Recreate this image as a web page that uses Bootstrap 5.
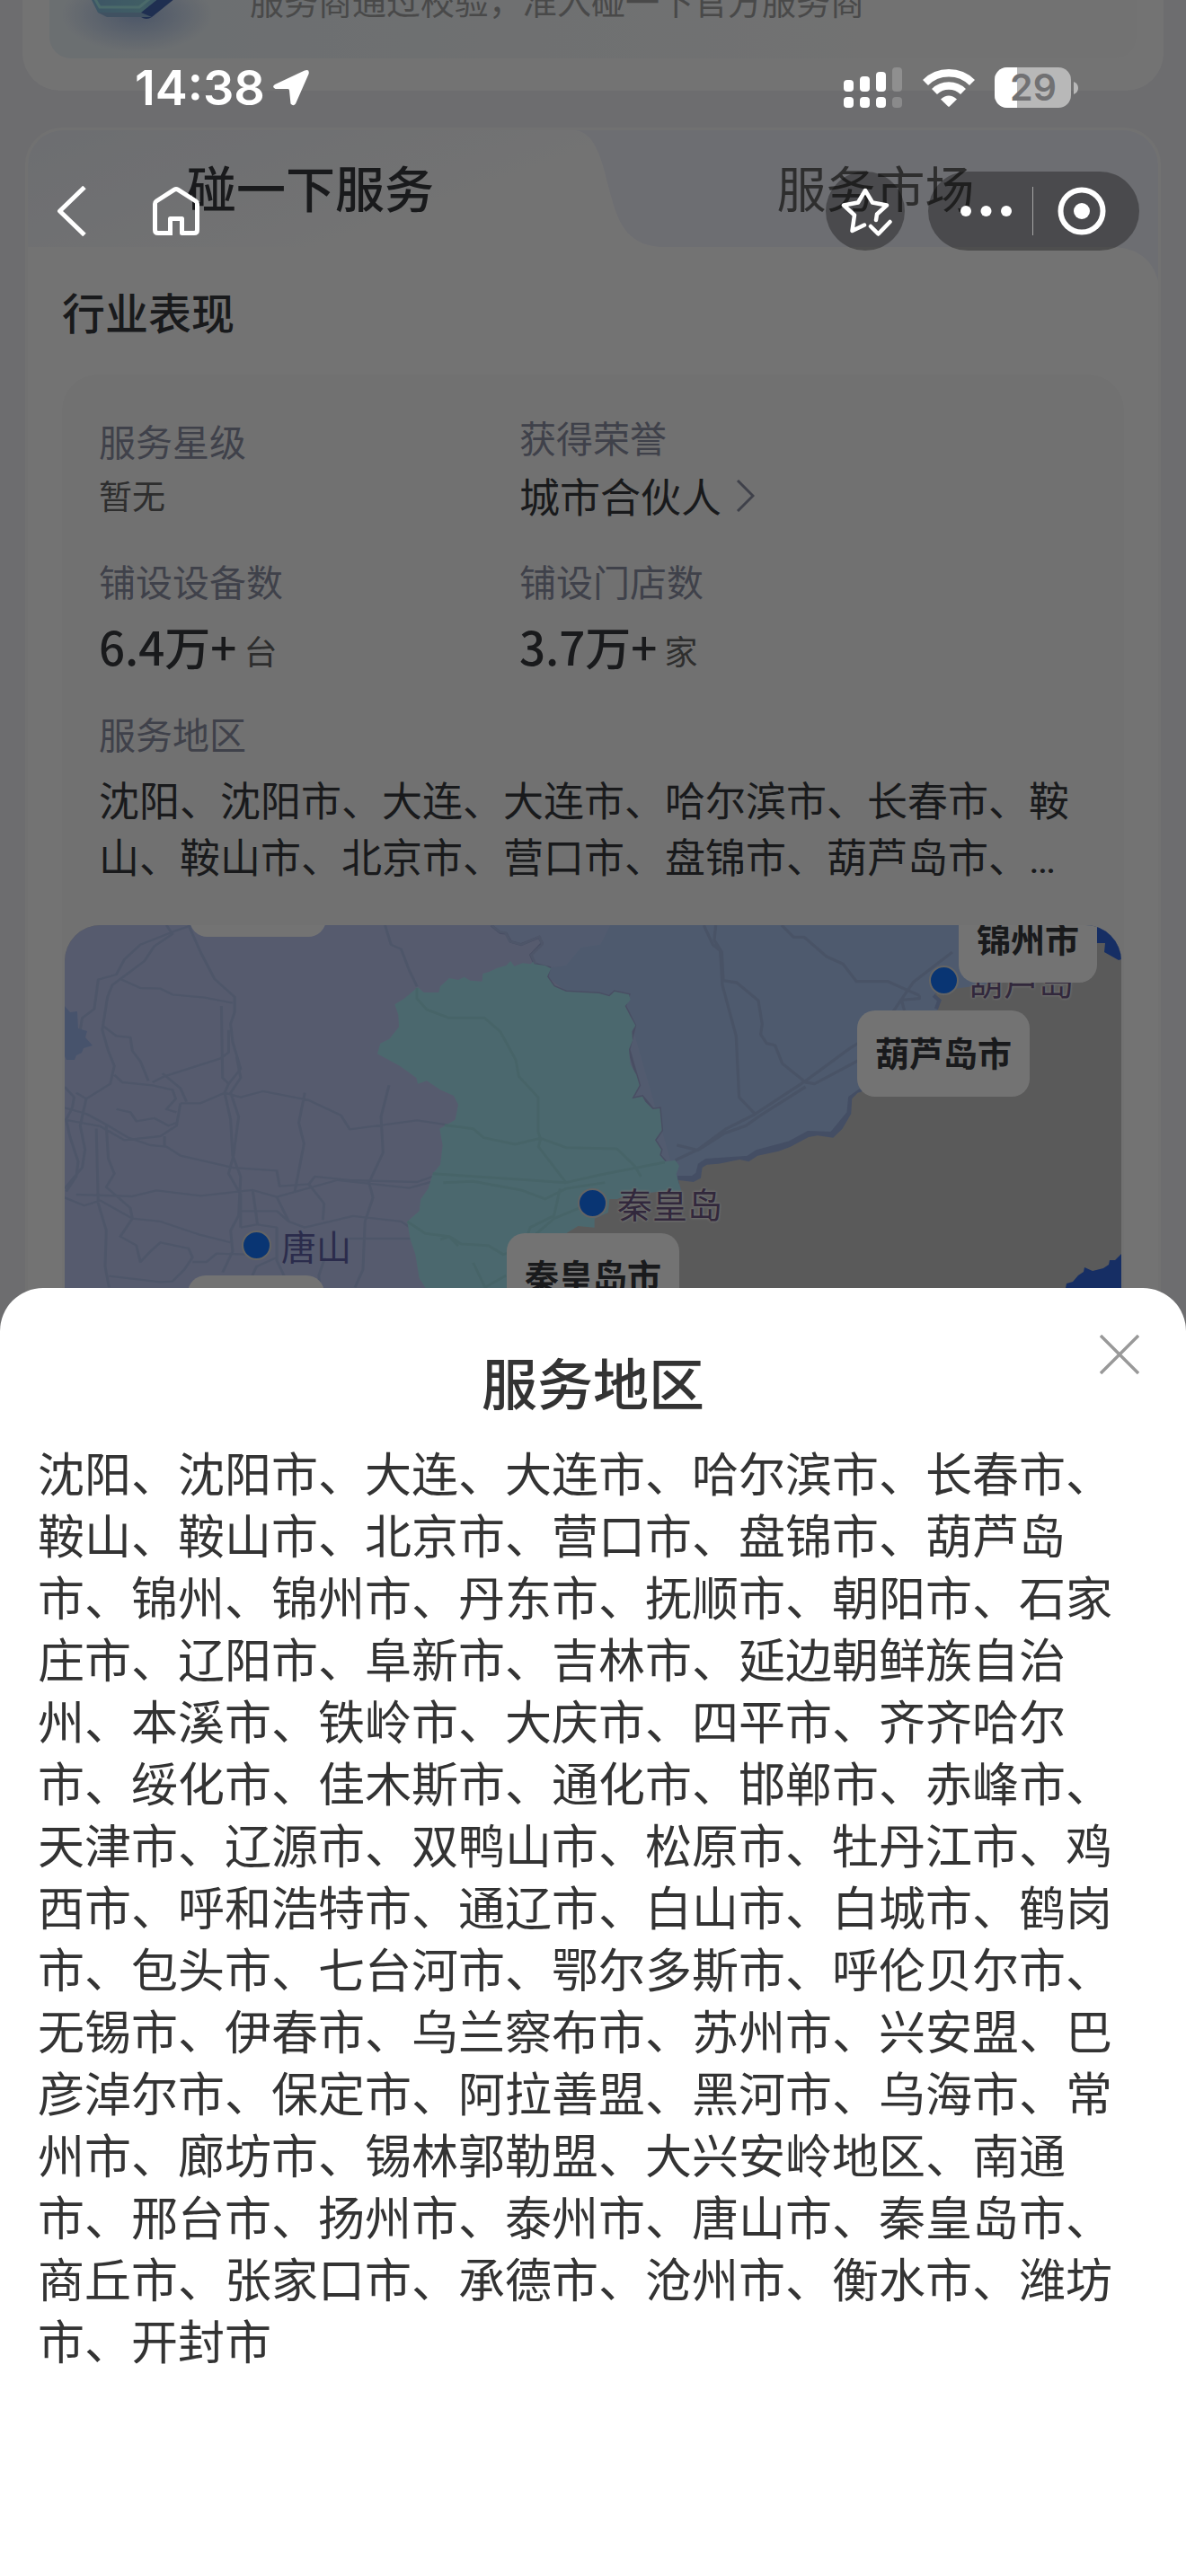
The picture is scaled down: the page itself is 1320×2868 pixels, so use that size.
<!DOCTYPE html>
<html lang="zh-CN">
<head>
<meta charset="utf-8">
<meta name="viewport" content="width=device-width, initial-scale=1">
<title>服务地区</title>
<link href="https://cdn.jsdelivr.net/npm/bootstrap@5.3.0/dist/css/bootstrap.min.css" rel="stylesheet">
<style>
  body { font-family: "Noto Sans CJK SC", sans-serif; background: #f1f1f6; color: #383a3e; min-height: 100vh; overflow: hidden; }
  button { border: 0; background: none; padding: 0; color: inherit; }
  svg { display: block; }
  .page-body { margin-top: -60px; height: 100vh; overflow: hidden; }
  .cert-card { margin: 0 25px; padding: 0 30px 36px; background: #fff; border-radius: 0 0 42px 42px; }
  .cert-inner { height: 125px; padding-bottom: 6px; border-radius: 0 0 24px 24px; background: linear-gradient(90deg, #edf5fb, #f6f9fb 45%, #fdfdfd 80%); font-size: 38px; color: #a2a2a2; }
  .cert-badge { width: 223px; height: 125px; }
  .service-card { margin: 41px 28px 0; border: 3px solid #fbfbfb; border-radius: 42px 42px 0 0; background: #fff; overflow: hidden; }
  .tab-strip { height: 130px; background: linear-gradient(160deg, #f0f3fa, #fff 45%); }
  .tab-shape { inset: 0 0 auto auto; width: 648px; height: 168px; }
  .tab-item { font-size: 55px; line-height: 80px; padding-bottom: 6px; color: #666; }
  .tab-item.active { color: #383a3e; font-weight: 500; }
  .perf { padding: 0 38px; }
  .perf-title { font-size: 48px; line-height: 70px; font-weight: 500; margin: 36px 0 36px; }
  .perf-panel { background: #fafafa; border-radius: 40px; padding: 44px 3px 0; }
  .perf-text { padding: 0 38px 42px; }
  .col-first { width: 468px; }
  .fact-star { padding-top: 4px; }
  .fact-label { font-size: 41px; line-height: 50px; color: #8c90a5; }
  .fact-label + * { margin-top: 11px; }
  .fact-label + .fact-count { margin-top: 18px; }
  .fact-row { margin-top: 39px; }
  .fact-region { margin-top: 42px; }
  .fact-label + .region-line { margin-top: 21px; }
  .fact-big { font-size: 45px; line-height: 60px; }
  .fact-num { font-size: 51px; line-height: 60px; font-weight: 500; }
  .fact-unit { font-size: 37px; line-height: 50px; color: #666; }
  .region-line { font-family: Roboto, "Noto Sans CJK SC", sans-serif; font-size: 45px; line-height: 63px; }
  .city-map { height: 500px; border-radius: 40px 40px 0 0; overflow: hidden; background: #c8c8c8; }
  .city-map svg { width: 1176px; height: 500px; }
  .map-pin { height: 38px; gap: 11px; font-size: 39px; line-height: 38px; color: #6f5985; text-shadow: 0 0 3px #fff, 0 0 3px #fff; }
  .map-pin::before { content: ""; width: 33px; height: 33px; border-radius: 50%; background: #1677ff; border: 2px solid #ddd; }
  .map-pin.inland { color: #6062a8; text-shadow: none; }
  .map-tag { height: 96px; padding: 0 20px; border-radius: 20px; background: #fff; font-size: 38px; font-weight: 700; line-height: 92px; min-width: 152px; }
  .page-shade { inset: 0; background: rgba(0,0,0,.55); }
  .top-bar { inset: 0 0 auto 0; color: #fff; padding-top: 66px; }
  .status-row { height: 64px; padding: 0 120px 0 150px; font-family: Inter, sans-serif; font-weight: 600; font-size: 54px; line-height: 64px; }
  .status-icons { gap: 22px; }
  .nav-row { height: 88px; margin-top: 61px; padding: 0 52px 0 63px; }
  .nav-home { margin-left: 73px; }
  .round-btn { width: 88px; height: 88px; border-radius: 50%; background: rgba(0,0,0,.32); }
  .capsule { width: 235px; height: 88px; margin-left: 26px; border-radius: 44px; background: rgba(0,0,0,.32); }
  .region-sheet.offcanvas { height: 50vh; border: 0; border-radius: 48px 48px 0 0; background: #fff; color: #333; padding: 64px 42px 0; visibility: visible; }
  .sheet-title { font-size: 62px; line-height: 80px; font-weight: 500; }
  .sheet-list { font-size: 52px; line-height: 69px; margin: 26px 0 0; }
  .sheet-close { top: 52px; right: 52px; }
</style>
<script src="https://cdn.jsdelivr.net/npm/bootstrap@5.3.0/dist/js/bootstrap.bundle.min.js"></script>
</head>
<body>
<main class="page-body">
  <section class="cert-card">
    <div class="cert-inner d-flex align-items-center">
      <svg class="cert-badge flex-shrink-0" viewBox="0 0 223 125" aria-hidden="true">
        <defs>
          <radialGradient id="glow"><stop offset="0" stop-color="#a9c0e6"/><stop offset="1" stop-color="#a9c0e6" stop-opacity="0"/></radialGradient>
          <linearGradient id="gem" x1="0" x2="1"><stop offset="0" stop-color="#86bce2"/><stop offset=".6" stop-color="#8fd0de"/><stop offset="1" stop-color="#6da4e0"/></linearGradient>
        </defs>
        <ellipse cx="98" cy="79" rx="84" ry="42" fill="url(#glow)"/>
        <path d="M102 76l48-37v14l-36 29q-6 4-12 0z" fill="#4668b4"/>
        <path d="M42 53l12 24h48l42-34-30-30H60z" fill="url(#gem)"/>
        <path d="M48 57l8 14h44l32-26" fill="none" stroke="#a6ecec" stroke-width="3"/>
        <path d="M54 77h48l12 5H64z" fill="#8fb4d8"/>
      </svg>
      <span>服务商通过校验，准入碰一下官方服务商</span>
    </div>
  </section>

  <section class="service-card">
    <div class="tab-strip position-relative">
      <svg class="tab-shape position-absolute" viewBox="0 0 648 168" preserveAspectRatio="none" aria-hidden="true">
        <path d="M0 0C20 3 28 28 36 62C46 100 54 130 100 130H600C628 132 642 146 648 168V0z" fill="#f1f3fd"/>
      </svg>
      <div class="d-flex h-100 position-relative" role="tablist">
        <button class="tab-item active col-6" type="button" role="tab" aria-selected="true">碰一下服务</button>
        <button class="tab-item col-6" type="button" role="tab" aria-selected="false">服务市场</button>
      </div>
    </div>
    <div class="perf">
      <h2 class="perf-title">行业表现</h2>
      <div class="perf-panel">
        <div class="perf-text">
          <div class="d-flex">
            <div class="col-first fact-star">
              <div class="fact-label">服务星级</div>
              <div class="fact-unit">暂无</div>
            </div>
            <div>
              <div class="fact-label">获得荣誉</div>
              <a class="fact-big d-flex align-items-center text-reset text-decoration-none" href="#honor">城市合伙人
                <svg class="ms-3" width="21" height="36" viewBox="0 0 21 36" fill="none" stroke="#8c90a5" stroke-width="3" aria-hidden="true"><path d="M2 1l17 17L2 35"/></svg>
              </a>
            </div>
          </div>
          <div class="fact-row d-flex">
            <div class="col-first">
              <div class="fact-label">铺设设备数</div>
              <div class="fact-count d-flex align-items-end"><span class="fact-num">6.4万+</span><span class="fact-unit ms-2">台</span></div>
            </div>
            <div>
              <div class="fact-label">铺设门店数</div>
              <div class="fact-count d-flex align-items-end"><span class="fact-num">3.7万+</span><span class="fact-unit ms-2">家</span></div>
            </div>
          </div>
          <div class="fact-label fact-region">服务地区</div>
          <div class="region-line">沈阳、沈阳市、大连、大连市、哈尔滨市、长春市、鞍山、鞍山市、北京市、营口市、盘锦市、葫芦岛市、…</div>
        </div>
        <div class="city-map position-relative">
          <svg viewBox="0 0 1176 500" aria-hidden="true">
            <rect width="1176" height="500" fill="#bfcaf4"/>
            <g transform="matrix(.3333 0 0 .3333 328 0)">
              <path d="M440 0L470 25 490 28 505 55 540 65 600 40 610 60 572 100 585 130 800 300 1000 900H2560V0z" fill="#b6c9f5"/>
              <path d="M838 0L805 65 740 75 690 135 640 142 627 172 700 230 900 300 1060 860H2560V0z" fill="#adc8f4"/>
              <path d="M440 0L470 25 490 28 505 55 540 65 600 40 610 60 572 100 585 130 635 142 627 172 650 205 690 222 800 228 835 238 852 222 900 232 887 270 920 335 900 415 935 535 910 580 945 572 980 615 1003 612 1010 685 987 718 1008 750 1003 768 1022 790" fill="none" stroke="#a2aedc" stroke-width="9"/>
            </g>
            <!-- roads, west -->
            <g transform="matrix(.4464 0 0 .3333 -72 -30)" fill="none" stroke="#adbee9" stroke-width="7" stroke-linejoin="round">
              <path d="M480 90L435 110 350 155 310 205 290 255 245 272 235 370 205 400 200 440M415 90L430 120 385 160 360 210 320 250 280 290 268 330 255 440 270 510 285 560 275 620 215 670 190 650M470 90L500 180 535 270 585 330 585 380 575 420 580 480 600 570 570 620 555 600 552 360M300 270L350 300 400 302 430 322 510 332 580 350M255 425L290 460 325 465 330 510 350 545 370 610M285 590L305 615 380 625 430 640 438 670 415 705 440 715M405 585L450 635 465 680"/>
              <path d="M380 615L410 595 550 535 570 515 570 440M570 620L560 650 575 740 580 860 600 930 595 1060 575 1110 580 1180 555 1250M590 530L600 600 575 650 595 730 582 860 570 920 600 990 600 1100M450 685H500L560 650 600 665 655 645 770 675 850 725 872 772 1040 742 1120 758 1180 770 1205 800 1285 822 1345 803 1410 832 1540 835 1570 850M760 650L745 750 758 820 735 980M970 625L950 730 955 850 920 950 930 1000 910 1080 905 1240 885 1300"/>
              <path d="M161 630L185 665 180 700 165 740 175 800 195 880 190 930 165 980M215 670L200 760 212 840 205 900 161 970M161 700L215 720 270 760 320 800 375 825 415 830 450 860 580 900 690 910 697 962 770 955 785 930 870 942 1040 948 1100 920 1400 945M161 740L250 762 310 808 400 795 440 760 450 685M410 830V795M240 770L245 1020 265 1110 262 1230 272 1300M265 760L270 870 285 920 265 965 295 1000 325 1035 330 1070 300 1130 340 1160 350 1215 375 1180 400 1150 470 1170 480 1200 460 1240 430 1280 400 1282 272 1262M190 990L330 996 390 976 500 994 630 975 690 998 840 942M161 1000L210 1027 250 1010 330 1070 400 1080 500 1125 575 1150M290 705L325 715 340 745 385 735 420 760 440 750"/>
              <path d="M630 975L642 1090 690 1100V1210L715 1280M690 998L720 1080 760 1100 880 1062 1000 1080 1050 1125 1130 1140M595 1045H690L720 1080M600 1100L640 1090M770 955L808 1020 805 1075M810 1200L795 1260 797 1300M870 1137H1090L1140 1165M480 1215H515L540 1187 620 1190M690 1200L640 1230 615 1300M840 942L1020 968 1110 935M960 90L975 155 1000 170 1020 240 1040 295M1225 90L1245 112 1260 115 1272 145 1300 155 1345 128 1352 155 1325 190 1335 220"/>
            </g>
            <!-- coast and sea -->
            <g transform="matrix(.3333 0 0 .3333 328 0)">
              <path d="M1062 850L1115 850 1135 835 1142 805 1160 793 1200 790 1300 783 1330 763 1440 733 1500 700 1580 703 1640 630 1645 580 1680 555M1932 282L1944 250 1922 230" fill="none" stroke="#97addd" stroke-width="26"/>
              <path d="M690 1030L720 1005 780 1000 785 980 830 960 835 915 860 915 900 900 1000 890 1075 885 1065 852 1115 858 1140 845 1145 810 1160 800 1200 797 1270 783 1300 790 1330 770 1400 755 1440 740 1500 708 1530 703 1582 710 1613 680 1642 630 1645 580 1664 560 1680 555 1850 350 1932 282 1944 250 1922 230 1990 212 2118 195 2125 150 2400 60 2560 60V1500H690z" fill="#c8c8c8"/>
              <path d="M195 207L215 225 265 225 270 205 300 177 330 183 350 173 370 185 410 188 412 162 435 155 460 143 490 135 505 120 517 137 545 127 572 130 580 122 583 130 620 135 640 145 627 172 650 205 690 222 800 228 835 238 852 222 900 232 905 250 887 270 905 305 922 335 910 355 912 385 900 415 905 465 925 500 935 535 910 580 945 572 955 590 980 615 1003 612 1010 685 987 718 1008 750 1003 768 1022 790 1055 785 1068 805 1058 832 1075 890 1000 890 900 900 860 915 835 915 830 960 785 980 785 1010 730 1005 690 1030V1500H260L220 1210 200 1180 187 1100 170 1050 160 990 200 955 205 915 230 880 245 830 270 800 278 735 268 680 320 650 330 600 315 570 270 550 225 520 195 530 190 510 135 470 60 430 70 395 100 380 132 340 130 300 118 265 150 245z" fill="#a7e7f4"/>
              <g fill="none" stroke="#9edde6" stroke-width="9" stroke-linejoin="round">
                <path d="M192 210V245L225 282 300 310H418L470 355 522 450 532 505 597 575V690L605 715 598 740 690 860M285 668L380 680 415 710 520 732 605 712 690 743 860 747 920 805 940 840M245 830L540 850 690 860 800 835 1020 792M280 860L380 856 540 885 620 915 690 880 820 860M270 1050L300 1040 330 1072M160 990L220 1030 300 1040 340 1065 430 1070 480 1100 520 1090M670 880L650 970 570 1010 560 1040M735 945L650 980 580 1040M380 1128L420 1210 490 1170"/>
              </g>
              <g fill="none" stroke="#a2b8e2" stroke-width="10" stroke-linejoin="round">
                <path d="M1150 0L1180 65 1205 85 1212 200 1258 370 1268 575 1320 630M1190 0L1185 50 1210 90 1215 185 1260 192 1332 252 1345 330 1340 365 1360 395 1388 402 1412 462 1490 525 1520 530 1670 450M1410 0L1450 40H1485L1560 105 1615 130 1660 188H1765L1870 235M1055 785L1130 750 1225 680 1320 632 1490 520 1640 410 1740 350 1850 190 1980 90M1220 695L1290 670 1340 635 1490 540M1060 735L1130 752 1220 695M1870 235V245L1810 250 1820 285"/>
              </g>
            </g>
            <path d="M1149 0V20L1158 20 1157 30 1173 39 1176 38V0zM1114 404L1115 399 1122 397 1128 390 1134 386 1135 381 1144 385 1156 382 1162 378 1163 373 1169 373 1176 366V500H1114z" fill="#3166de"/>
            <path d="M0 90L6 97 14 96 15 115 25 118 23 125 31 134 21 137 19 142 13 145 11 150 2 150 0 146z" fill="#9db8f0"/>
          </svg>
          <div class="map-pin inland position-absolute d-flex align-items-center" style="left:197px;top:337px">唐山</div>
          <div class="map-pin position-absolute d-flex align-items-center" style="left:571px;top:290px">秦皇岛</div>
          <div class="map-pin position-absolute d-flex align-items-center" style="left:962px;top:42px">葫芦岛</div>
          <div class="map-tag position-absolute" style="left:139px;top:-83px"></div>
          <div class="map-tag position-absolute" style="left:137px;top:390px"></div>
          <div class="map-tag position-absolute" style="left:995px;top:-32px">锦州市</div>
          <div class="map-tag position-absolute" style="left:882px;top:95px">葫芦岛市</div>
          <div class="map-tag position-absolute" style="left:492px;top:343px">秦皇岛市</div>
        </div>
      </div>
    </div>
  </section>
</main>

<div class="page-shade position-absolute"></div>

<header class="top-bar position-absolute">
  <div class="status-row d-flex align-items-center">
    <span>14:38</span>
    <svg class="ms-2" width="42" height="42" viewBox="0 0 42 42" fill="#fff" aria-hidden="true"><path d="M3 17L36 1.500Q42-.5 40.500 5.500L26 38.500Q23.500 42 20.500 38.500L19 23.500Q19 22 17.500 22L3.500 22Q-1 20 3 17z"/></svg>
    <div class="status-icons d-flex align-items-center ms-auto">
      <svg width="66" height="46" viewBox="0 0 66 46" fill="#fff" aria-hidden="true">
        <rect y="14" width="11" height="13" rx="4"/><rect x="18" y="10" width="11" height="17" rx="4"/><rect x="36" y="5" width="11" height="22" rx="4"/><rect x="54" width="11" height="27" rx="4" opacity=".2"/>
        <rect y="33" width="11" height="12" rx="4"/><rect x="18" y="33" width="11" height="12" rx="4"/><rect x="36" y="33" width="11" height="12" rx="4"/><rect x="54" y="33" width="11" height="12" rx="4" opacity=".2"/>
      </svg>
      <svg width="58" height="44" viewBox="0 0 58 44" aria-hidden="true">
        <g fill="none" stroke="#fff" stroke-width="8.500"><path d="M3 16A37 37 0 0 1 55 16"/><path d="M13 26A23 23 0 0 1 45 26"/></g>
        <path d="M20 34.500Q29 26.500 38 34.500L29.800 42.500Q29 43.200 28.200 42.500z" fill="#fff"/>
      </svg>
      <svg width="93" height="46" viewBox="0 0 93 46" aria-label="29">
        <defs><clipPath id="cell"><rect width="85" height="45" rx="14"/></clipPath></defs>
        <g clip-path="url(#cell)"><rect width="85" height="45" fill="#b8b8b8"/><rect width="25" height="45" fill="#fff"/></g>
        <path d="M88 16q5 2 5 7t-5 7z" fill="#b8b8b8"/>
        <text x="43" y="37" text-anchor="middle" font-family="Inter, sans-serif" font-size="41" font-weight="600" fill="#717173">29</text>
      </svg>
    </div>
  </div>
  <div class="nav-row d-flex align-items-center">
    <button type="button" aria-label="返回"><svg width="34" height="56" viewBox="0 0 34 56" fill="none" stroke="#fff" stroke-width="5"><path d="M31 1.500L3.500 28 31 54.500" stroke-linejoin="round"/></svg></button>
    <button class="nav-home" type="button" aria-label="首页"><svg width="52" height="54" viewBox="0 0 52 54" fill="none" stroke="#fff" stroke-width="5" stroke-linejoin="round"><path d="M22 51.500H6Q2.500 51.500 2.500 48V19Q2.500 17 4 16L24 3.200Q26 2 28 3.200L48 16Q49.500 17 49.500 19V48Q49.500 51.500 46 51.500H32.500V35.500H19.500V54"/></svg></button>
    <button class="round-btn ms-auto" type="button" aria-label="收藏"><svg width="88" height="88" viewBox="0 0 88 88" fill="none" stroke="#fff" stroke-width="4.500" stroke-linecap="round" stroke-linejoin="round"><path d="M43 59.500L29.500 66 32 48.500 20 37.500 36 34.500 44 21 52 34.500 68 37.500 57 47.500 56 54M50 61L58.500 69.500 71.500 56"/></svg></button>
    <div class="capsule d-flex align-items-center">
      <button type="button" aria-label="更多" class="h-100"><svg width="117" height="88" viewBox="0 0 117 88" fill="#fff"><circle cx="42" cy="44" r="6"/><circle cx="64.500" cy="44" r="6"/><circle cx="87" cy="44" r="6"/><path d="M116 17h1v54h-1z" opacity=".5"/></svg></button>
      <button type="button" aria-label="关闭小程序" class="h-100"><svg width="118" height="88" viewBox="0 0 118 88"><circle cx="54" cy="44" r="23.500" fill="none" stroke="#fff" stroke-width="6"/><circle cx="54" cy="44" r="9" fill="#fff"/></svg></button>
    </div>
  </div>
</header>

<div class="offcanvas offcanvas-bottom show region-sheet" tabindex="-1" role="dialog" data-bs-backdrop="false" data-bs-scroll="true" aria-labelledby="sheetTitle">
  <button class="sheet-close position-absolute" type="button" aria-label="关闭"><svg width="44" height="44" viewBox="0 0 44 44" stroke="#999" stroke-width="3.500"><path d="M1 1l42 42M43 1L1 43"/></svg></button>
  <h1 class="sheet-title text-center m-0" id="sheetTitle">服务地区</h1>
  <p class="sheet-list">沈阳、沈阳市、大连、大连市、哈尔滨市、长春市、鞍山、鞍山市、北京市、营口市、盘锦市、葫芦岛市、锦州、锦州市、丹东市、抚顺市、朝阳市、石家庄市、辽阳市、阜新市、吉林市、延边朝鲜族自治州、本溪市、铁岭市、大庆市、四平市、齐齐哈尔市、绥化市、佳木斯市、通化市、邯郸市、赤峰市、天津市、辽源市、双鸭山市、松原市、牡丹江市、鸡西市、呼和浩特市、通辽市、白山市、白城市、鹤岗市、包头市、七台河市、鄂尔多斯市、呼伦贝尔市、无锡市、伊春市、乌兰察布市、苏州市、兴安盟、巴彦淖尔市、保定市、阿拉善盟、黑河市、乌海市、常州市、廊坊市、锡林郭勒盟、大兴安岭地区、南通市、邢台市、扬州市、泰州市、唐山市、秦皇岛市、商丘市、张家口市、承德市、沧州市、衡水市、潍坊市、开封市</p>
</div>
</body>
</html>
